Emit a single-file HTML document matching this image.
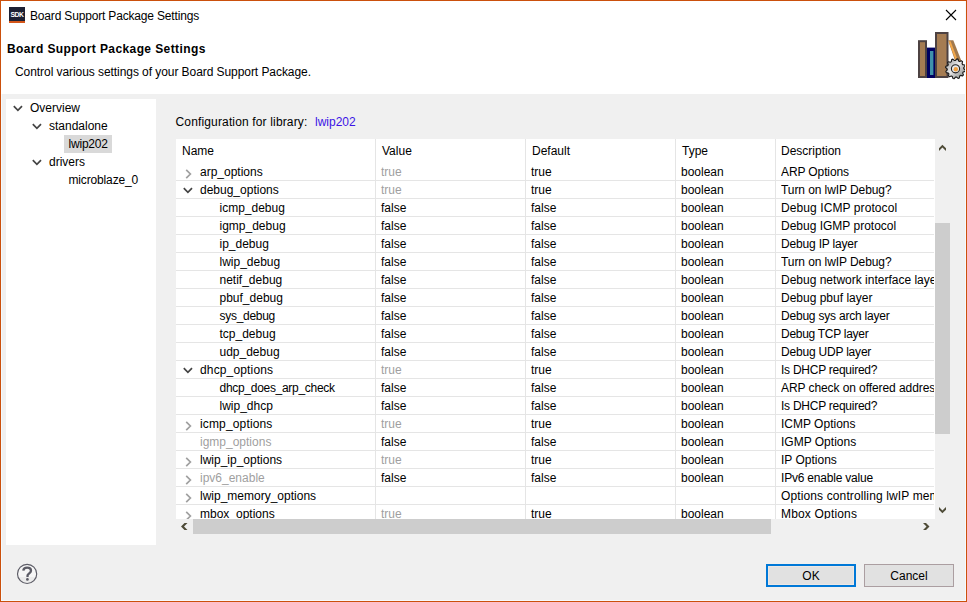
<!DOCTYPE html>
<html><head><meta charset="utf-8"><style>
html,body{margin:0;padding:0;}
body{width:967px;height:602px;position:relative;overflow:hidden;background:#f0f0f0;font-family:"Liberation Sans",sans-serif;font-size:12px;color:#000;}
.a{position:absolute;}
.t{position:absolute;white-space:nowrap;line-height:14px;font-size:12px;}
.g{color:#9f9f9f;}
.ic{position:absolute;overflow:visible;}
</style></head><body>
<div class="a" style="left:0;top:0;width:967px;height:94px;background:#fff"></div>
<div class="a" style="left:9px;top:7px;width:16px;height:14px;background:#1c2033"></div>
<div class="a" style="left:9px;top:21px;width:16px;height:2px;background:#d4561a"></div>
<div class="a" style="left:9.2px;top:9.7px;width:16px;height:10px;color:#fff;font-size:7.6px;line-height:10px;text-align:center;font-weight:bold;letter-spacing:-0.6px;transform:scaleX(0.9)">SDK</div>
<div class="t " style="left:30px;top:9px;letter-spacing:-0.17px">Board Support Package Settings</div>
<svg class="ic" style="left:945px;top:9px" width="12" height="12"><path d="M1 1 L11 11 M11 1 L1 11" stroke="#000" stroke-width="1.1"/></svg>
<div class="t " style="left:7px;top:42px;font-weight:bold;letter-spacing:0.4px">Board Support Package Settings</div>
<div class="t " style="left:15px;top:65px;letter-spacing:-0.065px">Control various settings of your Board Support Package.</div>
<svg class="ic" style="left:912px;top:28px" width="55" height="55">
<defs><linearGradient id="gg" x1="0" y1="0" x2="1" y2="1"><stop offset="0" stop-color="#888"/><stop offset="0.45" stop-color="#ececec"/><stop offset="0.62" stop-color="#c4c4c4"/><stop offset="1" stop-color="#7f8882"/></linearGradient></defs>
<rect x="7" y="13.2" width="7" height="35.8" fill="#a57c52" stroke="#4d4242" stroke-width="2"/>
<rect x="15" y="19.6" width="8" height="30.4" fill="#000060"/>
<rect x="18" y="23" width="3.4" height="24" fill="#3f91ab"/>
<rect x="24" y="5" width="11.5" height="44" fill="#a57c52" stroke="#4d4242" stroke-width="2"/>
<polygon points="36,12.3 41.3,12.3 53,42 47,44" fill="#a27a4e"/>
<polygon points="36.6,13.2 38.6,13.2 46.8,35 44.8,35.8" fill="#f3a84a"/>
<polygon points="53.42,42.10 53.16,43.38 51.17,43.97 50.69,44.94 51.44,46.88 50.58,47.86 48.56,47.38 47.66,47.98 47.34,50.04 46.10,50.46 44.59,49.03 43.51,49.10 42.20,50.72 40.92,50.46 40.33,48.47 39.36,47.99 37.42,48.74 36.44,47.88 36.92,45.86 36.32,44.96 34.26,44.64 33.84,43.40 35.27,41.89 35.20,40.81 33.58,39.50 33.84,38.22 35.83,37.63 36.31,36.66 35.56,34.72 36.42,33.74 38.44,34.22 39.34,33.62 39.66,31.56 40.90,31.14 42.41,32.57 43.49,32.50 44.80,30.88 46.08,31.14 46.67,33.13 47.64,33.61 49.58,32.86 50.56,33.72 50.08,35.74 50.68,36.64 52.74,36.96 53.16,38.20 51.73,39.71 51.80,40.79" fill="url(#gg)" stroke="#1a1a1a" stroke-width="1.1" stroke-linejoin="round"/>
<circle cx="43.5" cy="40.8" r="4.1" fill="#e8e8e8" stroke="#222" stroke-width="1.1"/>
<circle cx="43.8" cy="41.2" r="2.2" fill="#f0a040"/>
</svg>
<div class="a" style="left:6px;top:99px;width:150px;height:446px;background:#fff"></div>
<div class="a" style="left:64px;top:135px;width:48px;height:18px;background:#d9d9d9"></div>
<svg class="ic" style="left:12.5px;top:105px" width="11" height="8"><path d="M0.8 1.2 L4.9 5.3 L9 1.2" fill="none" stroke="#444" stroke-width="1.7"/></svg>
<div class="t " style="left:30px;top:101px;">Overview</div>
<svg class="ic" style="left:31.8px;top:123px" width="11" height="8"><path d="M0.8 1.2 L4.9 5.3 L9 1.2" fill="none" stroke="#444" stroke-width="1.7"/></svg>
<div class="t " style="left:49px;top:119px;">standalone</div>
<div class="t " style="left:68.5px;top:137px;letter-spacing:-0.2px">lwip202</div>
<svg class="ic" style="left:31.8px;top:159px" width="11" height="8"><path d="M0.8 1.2 L4.9 5.3 L9 1.2" fill="none" stroke="#444" stroke-width="1.7"/></svg>
<div class="t " style="left:49px;top:155px;">drivers</div>
<div class="t " style="left:68.5px;top:173px;letter-spacing:-0.15px">microblaze_0</div>
<div class="t " style="left:175.5px;top:115px;letter-spacing:0.15px">Configuration for library:</div>
<div class="t " style="left:315px;top:115px;color:#3c14e6">lwip202</div>
<div class="a" style="left:176px;top:139px;width:759px;height:380px;background:#fff;overflow:hidden">
<div class="a" style="left:0;top:41px;width:758px;height:1px;background:#e5e5e5"></div>
<div class="a" style="left:0;top:59px;width:758px;height:1px;background:#e5e5e5"></div>
<div class="a" style="left:0;top:77px;width:758px;height:1px;background:#e5e5e5"></div>
<div class="a" style="left:0;top:95px;width:758px;height:1px;background:#e5e5e5"></div>
<div class="a" style="left:0;top:113px;width:758px;height:1px;background:#e5e5e5"></div>
<div class="a" style="left:0;top:131px;width:758px;height:1px;background:#e5e5e5"></div>
<div class="a" style="left:0;top:149px;width:758px;height:1px;background:#e5e5e5"></div>
<div class="a" style="left:0;top:167px;width:758px;height:1px;background:#e5e5e5"></div>
<div class="a" style="left:0;top:185px;width:758px;height:1px;background:#e5e5e5"></div>
<div class="a" style="left:0;top:203px;width:758px;height:1px;background:#e5e5e5"></div>
<div class="a" style="left:0;top:221px;width:758px;height:1px;background:#e5e5e5"></div>
<div class="a" style="left:0;top:239px;width:758px;height:1px;background:#e5e5e5"></div>
<div class="a" style="left:0;top:257px;width:758px;height:1px;background:#e5e5e5"></div>
<div class="a" style="left:0;top:275px;width:758px;height:1px;background:#e5e5e5"></div>
<div class="a" style="left:0;top:293px;width:758px;height:1px;background:#e5e5e5"></div>
<div class="a" style="left:0;top:311px;width:758px;height:1px;background:#e5e5e5"></div>
<div class="a" style="left:0;top:329px;width:758px;height:1px;background:#e5e5e5"></div>
<div class="a" style="left:0;top:347px;width:758px;height:1px;background:#e5e5e5"></div>
<div class="a" style="left:0;top:365px;width:758px;height:1px;background:#e5e5e5"></div>
<div class="a" style="left:199px;top:0;width:1px;height:380px;background:#e5e5e5"></div>
<div class="a" style="left:349px;top:0;width:1px;height:380px;background:#e5e5e5"></div>
<div class="a" style="left:499px;top:0;width:1px;height:380px;background:#e5e5e5"></div>
<div class="a" style="left:599px;top:0;width:1px;height:380px;background:#e5e5e5"></div>
<div class="t " style="left:6px;top:5px;">Name</div>
<div class="t " style="left:206px;top:5px;">Value</div>
<div class="t " style="left:356px;top:5px;">Default</div>
<div class="t " style="left:506px;top:5px;">Type</div>
<div class="t " style="left:605px;top:5px;">Description</div>
<svg class="ic" style="left:8.5px;top:29.5px" width="8" height="11"><path d="M1.2 0.8 L5.4 5 L1.2 9.2" fill="none" stroke="#a0a0a0" stroke-width="1.7"/></svg>
<div class="t " style="left:24px;top:26px;">arp_options</div>
<div class="t g" style="left:205px;top:26px;">true</div>
<div class="t " style="left:355px;top:26px;">true</div>
<div class="t " style="left:505px;top:26px;">boolean</div>
<div class="a" style="left:605px;top:26px;width:153px;height:14px;overflow:hidden"><div class="t" style="left:0;top:0;letter-spacing:-0.11px">ARP Options</div></div>
<svg class="ic" style="left:7px;top:48px" width="11" height="8"><path d="M0.8 1.2 L4.9 5.3 L9 1.2" fill="none" stroke="#444" stroke-width="1.7"/></svg>
<div class="t " style="left:24px;top:44px;">debug_options</div>
<div class="t g" style="left:205px;top:44px;">true</div>
<div class="t " style="left:355px;top:44px;">true</div>
<div class="t " style="left:505px;top:44px;">boolean</div>
<div class="a" style="left:605px;top:44px;width:153px;height:14px;overflow:hidden"><div class="t" style="left:0;top:0;letter-spacing:-0.083px">Turn on lwIP Debug?</div></div>
<div class="t " style="left:43.5px;top:62px;">icmp_debug</div>
<div class="t " style="left:205px;top:62px;">false</div>
<div class="t " style="left:355px;top:62px;">false</div>
<div class="t " style="left:505px;top:62px;">boolean</div>
<div class="a" style="left:605px;top:62px;width:153px;height:14px;overflow:hidden"><div class="t" style="left:0;top:0;letter-spacing:0.089px">Debug ICMP protocol</div></div>
<div class="t " style="left:43.5px;top:80px;">igmp_debug</div>
<div class="t " style="left:205px;top:80px;">false</div>
<div class="t " style="left:355px;top:80px;">false</div>
<div class="t " style="left:505px;top:80px;">boolean</div>
<div class="a" style="left:605px;top:80px;width:153px;height:14px;overflow:hidden"><div class="t" style="left:0;top:0;letter-spacing:0px">Debug IGMP protocol</div></div>
<div class="t " style="left:43.5px;top:98px;">ip_debug</div>
<div class="t " style="left:205px;top:98px;">false</div>
<div class="t " style="left:355px;top:98px;">false</div>
<div class="t " style="left:505px;top:98px;">boolean</div>
<div class="a" style="left:605px;top:98px;width:153px;height:14px;overflow:hidden"><div class="t" style="left:0;top:0;letter-spacing:-0.177px">Debug IP layer</div></div>
<div class="t " style="left:43.5px;top:116px;">lwip_debug</div>
<div class="t " style="left:205px;top:116px;">false</div>
<div class="t " style="left:355px;top:116px;">false</div>
<div class="t " style="left:505px;top:116px;">boolean</div>
<div class="a" style="left:605px;top:116px;width:153px;height:14px;overflow:hidden"><div class="t" style="left:0;top:0;letter-spacing:-0.083px">Turn on lwIP Debug?</div></div>
<div class="t " style="left:43.5px;top:134px;">netif_debug</div>
<div class="t " style="left:205px;top:134px;">false</div>
<div class="t " style="left:355px;top:134px;">false</div>
<div class="t " style="left:505px;top:134px;">boolean</div>
<div class="a" style="left:605px;top:134px;width:153px;height:14px;overflow:hidden"><div class="t" style="left:0;top:0;letter-spacing:0px">Debug network interface layer</div></div>
<div class="t " style="left:43.5px;top:152px;">pbuf_debug</div>
<div class="t " style="left:205px;top:152px;">false</div>
<div class="t " style="left:355px;top:152px;">false</div>
<div class="t " style="left:505px;top:152px;">boolean</div>
<div class="a" style="left:605px;top:152px;width:153px;height:14px;overflow:hidden"><div class="t" style="left:0;top:0;letter-spacing:0px">Debug pbuf layer</div></div>
<div class="t " style="left:43.5px;top:170px;letter-spacing:-0.29px">sys_debug</div>
<div class="t " style="left:205px;top:170px;">false</div>
<div class="t " style="left:355px;top:170px;">false</div>
<div class="t " style="left:505px;top:170px;">boolean</div>
<div class="a" style="left:605px;top:170px;width:153px;height:14px;overflow:hidden"><div class="t" style="left:0;top:0;letter-spacing:-0.211px">Debug sys arch layer</div></div>
<div class="t " style="left:43.5px;top:188px;">tcp_debug</div>
<div class="t " style="left:205px;top:188px;">false</div>
<div class="t " style="left:355px;top:188px;">false</div>
<div class="t " style="left:505px;top:188px;">boolean</div>
<div class="a" style="left:605px;top:188px;width:153px;height:14px;overflow:hidden"><div class="t" style="left:0;top:0;letter-spacing:-0.279px">Debug TCP layer</div></div>
<div class="t " style="left:43.5px;top:206px;">udp_debug</div>
<div class="t " style="left:205px;top:206px;">false</div>
<div class="t " style="left:355px;top:206px;">false</div>
<div class="t " style="left:505px;top:206px;">boolean</div>
<div class="a" style="left:605px;top:206px;width:153px;height:14px;overflow:hidden"><div class="t" style="left:0;top:0;letter-spacing:-0.2px">Debug UDP layer</div></div>
<svg class="ic" style="left:7px;top:228px" width="11" height="8"><path d="M0.8 1.2 L4.9 5.3 L9 1.2" fill="none" stroke="#444" stroke-width="1.7"/></svg>
<div class="t " style="left:24px;top:224px;letter-spacing:0.15px">dhcp_options</div>
<div class="t g" style="left:205px;top:224px;">true</div>
<div class="t " style="left:355px;top:224px;">true</div>
<div class="t " style="left:505px;top:224px;">boolean</div>
<div class="a" style="left:605px;top:224px;width:153px;height:14px;overflow:hidden"><div class="t" style="left:0;top:0;letter-spacing:-0.256px">Is DHCP required?</div></div>
<div class="t " style="left:43.5px;top:242px;letter-spacing:-0.29px">dhcp_does_arp_check</div>
<div class="t " style="left:205px;top:242px;">false</div>
<div class="t " style="left:355px;top:242px;">false</div>
<div class="t " style="left:505px;top:242px;">boolean</div>
<div class="a" style="left:605px;top:242px;width:153px;height:14px;overflow:hidden"><div class="t" style="left:0;top:0;letter-spacing:-0.08px">ARP check on offered address</div></div>
<div class="t " style="left:43.5px;top:260px;">lwip_dhcp</div>
<div class="t " style="left:205px;top:260px;">false</div>
<div class="t " style="left:355px;top:260px;">false</div>
<div class="t " style="left:505px;top:260px;">boolean</div>
<div class="a" style="left:605px;top:260px;width:153px;height:14px;overflow:hidden"><div class="t" style="left:0;top:0;letter-spacing:-0.256px">Is DHCP required?</div></div>
<svg class="ic" style="left:8.5px;top:281.5px" width="8" height="11"><path d="M1.2 0.8 L5.4 5 L1.2 9.2" fill="none" stroke="#a0a0a0" stroke-width="1.7"/></svg>
<div class="t " style="left:24px;top:278px;letter-spacing:0.15px">icmp_options</div>
<div class="t g" style="left:205px;top:278px;">true</div>
<div class="t " style="left:355px;top:278px;">true</div>
<div class="t " style="left:505px;top:278px;">boolean</div>
<div class="a" style="left:605px;top:278px;width:153px;height:14px;overflow:hidden"><div class="t" style="left:0;top:0;letter-spacing:0px">ICMP Options</div></div>
<div class="t g" style="left:24px;top:296px;">igmp_options</div>
<div class="t " style="left:205px;top:296px;">false</div>
<div class="t " style="left:355px;top:296px;">false</div>
<div class="t " style="left:505px;top:296px;">boolean</div>
<div class="a" style="left:605px;top:296px;width:153px;height:14px;overflow:hidden"><div class="t" style="left:0;top:0;letter-spacing:0px">IGMP Options</div></div>
<svg class="ic" style="left:8.5px;top:317.5px" width="8" height="11"><path d="M1.2 0.8 L5.4 5 L1.2 9.2" fill="none" stroke="#a0a0a0" stroke-width="1.7"/></svg>
<div class="t " style="left:24px;top:314px;">lwip_ip_options</div>
<div class="t g" style="left:205px;top:314px;">true</div>
<div class="t " style="left:355px;top:314px;">true</div>
<div class="t " style="left:505px;top:314px;">boolean</div>
<div class="a" style="left:605px;top:314px;width:153px;height:14px;overflow:hidden"><div class="t" style="left:0;top:0;letter-spacing:0px">IP Options</div></div>
<svg class="ic" style="left:8.5px;top:335.5px" width="8" height="11"><path d="M1.2 0.8 L5.4 5 L1.2 9.2" fill="none" stroke="#a0a0a0" stroke-width="1.7"/></svg>
<div class="t g" style="left:24px;top:332px;">ipv6_enable</div>
<div class="t " style="left:205px;top:332px;">false</div>
<div class="t " style="left:355px;top:332px;">false</div>
<div class="t " style="left:505px;top:332px;">boolean</div>
<div class="a" style="left:605px;top:332px;width:153px;height:14px;overflow:hidden"><div class="t" style="left:0;top:0;letter-spacing:-0.206px">IPv6 enable value</div></div>
<svg class="ic" style="left:8.5px;top:353.5px" width="8" height="11"><path d="M1.2 0.8 L5.4 5 L1.2 9.2" fill="none" stroke="#a0a0a0" stroke-width="1.7"/></svg>
<div class="t " style="left:24px;top:350px;">lwip_memory_options</div>
<div class="a" style="left:605px;top:350px;width:153px;height:14px;overflow:hidden"><div class="t" style="left:0;top:0;letter-spacing:0.125px">Options controlling lwIP memory usage</div></div>
<svg class="ic" style="left:8.5px;top:371.5px" width="8" height="11"><path d="M1.2 0.8 L5.4 5 L1.2 9.2" fill="none" stroke="#a0a0a0" stroke-width="1.7"/></svg>
<div class="t " style="left:24px;top:368px;">mbox_options</div>
<div class="t g" style="left:205px;top:368px;">true</div>
<div class="t " style="left:355px;top:368px;">true</div>
<div class="t " style="left:505px;top:368px;">boolean</div>
<div class="a" style="left:605px;top:368px;width:153px;height:14px;overflow:hidden"><div class="t" style="left:0;top:0;letter-spacing:0.173px">Mbox Options</div></div>
</div>
<div class="a" style="left:935px;top:223px;width:15px;height:211px;background:#cdcdcd"></div>
<div class="a" style="left:193px;top:519px;width:578px;height:15px;background:#cdcdcd"></div>
<svg class="ic" style="left:0;top:0" width="967" height="602"><g fill="#4f4c38"><polygon points="939,148.3 942.4,144.8 946,148.3 946,151 942.4,147.6 939,151"/><polygon points="939,507 942.4,510.4 946,507 946,509.7 942.4,513.2 939,509.7"/><polygon points="181,526.5 184.5,523 187.5,523 184,526.5 187.5,530 184.5,530"/><polygon points="923,523 926,523 929.5,526.5 926,530 923,530 926.5,526.5"/></g></svg>
<svg class="ic" style="left:16px;top:563px" width="22" height="22">
<defs><linearGradient id="hg" x1="0" y1="0" x2="0" y2="1"><stop offset="0.66" stop-color="#f6f6f6"/><stop offset="0.66" stop-color="#ebebeb"/></linearGradient></defs>
<circle cx="11.1" cy="10.9" r="9.6" fill="url(#hg)" stroke="#5c5c66" stroke-width="1.15"/>
<path d="M7.3 7.6 C7.5 5.6 9.1 4.7 11.1 4.7 C13.3 4.7 15 5.8 15 7.7 C15 9.8 12.3 10.4 11.6 12.2 L11.5 14" fill="none" stroke="#5c5c66" stroke-width="2.3"/>
<circle cx="11.4" cy="16.4" r="1.35" fill="#5c5c66"/>
</svg>
<div class="a" style="left:766px;top:564px;width:86px;height:19px;border:2px solid #0078d7;background:#e1e1e1;box-shadow:inset 0 0 0 1px #ede8e5"></div>
<div class="t" style="left:766px;top:569px;width:90px;text-align:center">OK</div>
<div class="a" style="left:864px;top:564px;width:88px;height:21px;border:1px solid #ab9ea1;background:#e1e1e1"></div>
<div class="t" style="left:864px;top:569px;width:90px;text-align:center">Cancel</div>
<div class="a" style="left:0;top:0;width:965px;height:600px;border:1px solid #cb500c"></div>
<div class="a" style="left:1px;top:94px;width:1px;height:506px;background:#f5fafd"></div>
<div class="a" style="left:965px;top:1px;width:1px;height:600px;background:#f5fafd"></div>
<div class="a" style="left:1px;top:600px;width:965px;height:1px;background:#f5fafd"></div>
</body></html>
